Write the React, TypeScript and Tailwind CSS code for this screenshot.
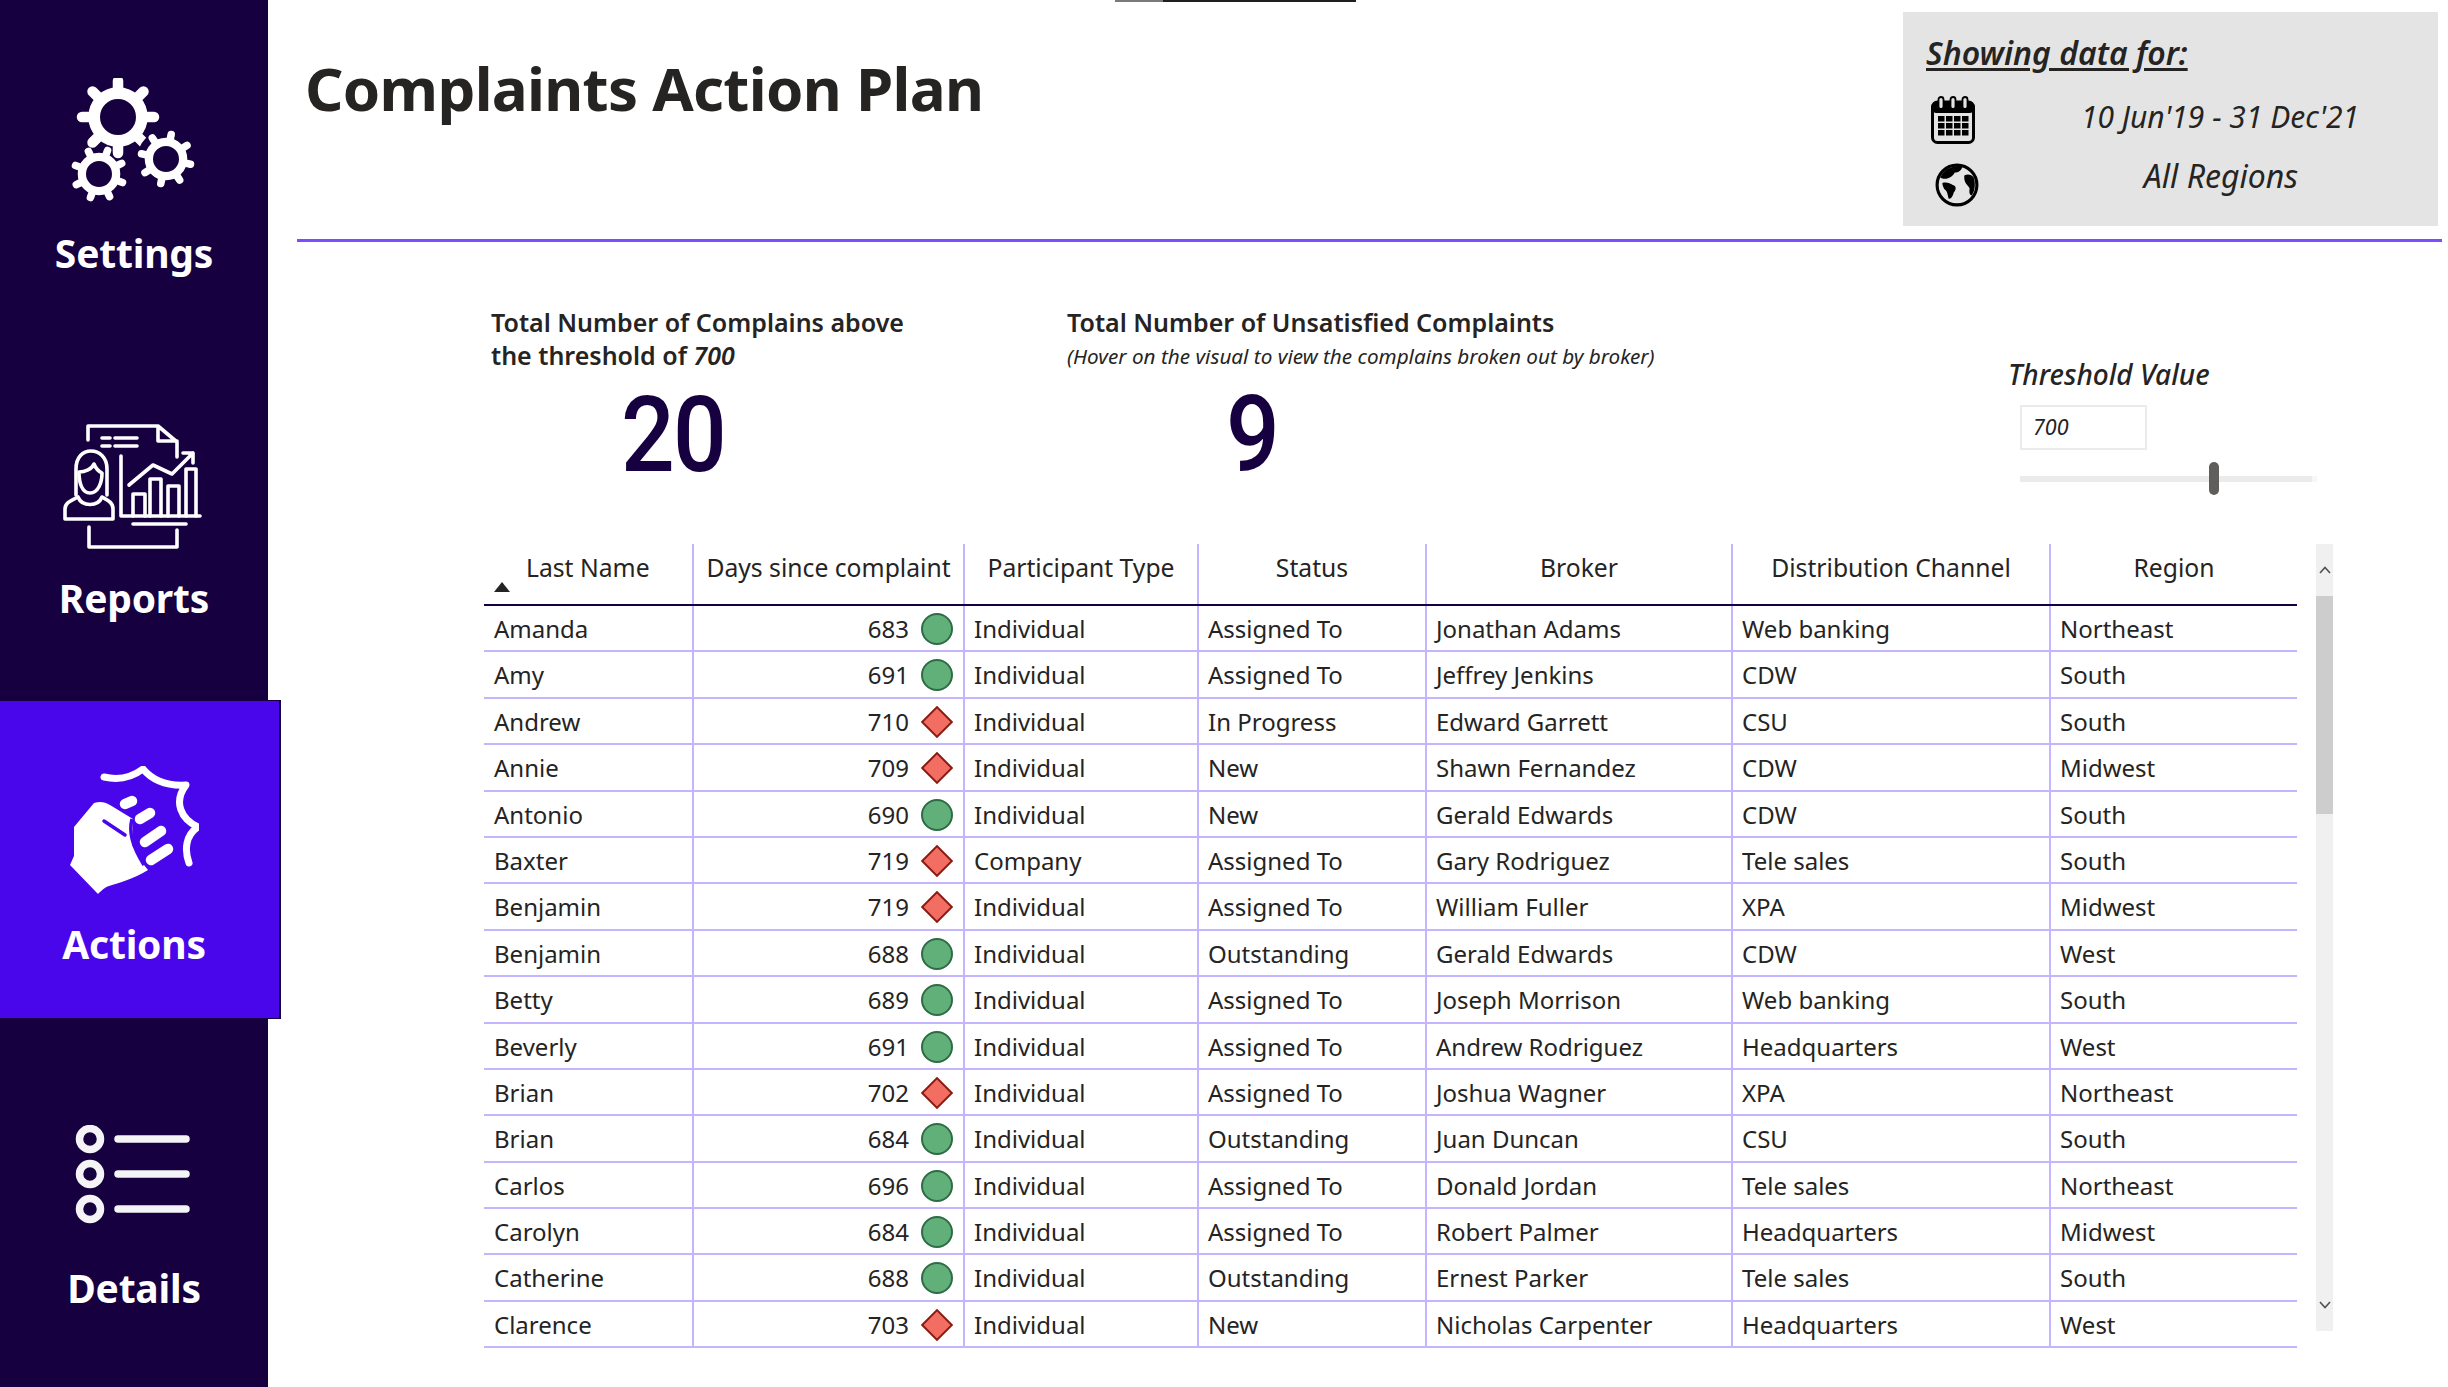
const rows: [string, number, string, string, string, string, string][] = [
  ["Amanda", 683, "Individual", "Assigned To", "Jonathan Adams", "Web banking", "Northeast"],
  ["Amy", 691, "Individual", "Assigned To", "Jeffrey Jenkins", "CDW", "South"],
  ["Andrew", 710, "Individual", "In Progress", "Edward Garrett", "CSU", "South"],
  ["Annie", 709, "Individual", "New", "Shawn Fernandez", "CDW", "Midwest"],
  ["Antonio", 690, "Individual", "New", "Gerald Edwards", "CDW", "South"],
  ["Baxter", 719, "Company", "Assigned To", "Gary Rodriguez", "Tele sales", "South"],
  ["Benjamin", 719, "Individual", "Assigned To", "William Fuller", "XPA", "Midwest"],
  ["Benjamin", 688, "Individual", "Outstanding", "Gerald Edwards", "CDW", "West"],
  ["Betty", 689, "Individual", "Assigned To", "Joseph Morrison", "Web banking", "South"],
  ["Beverly", 691, "Individual", "Assigned To", "Andrew Rodriguez", "Headquarters", "West"],
  ["Brian", 702, "Individual", "Assigned To", "Joshua Wagner", "XPA", "Northeast"],
  ["Brian", 684, "Individual", "Outstanding", "Juan Duncan", "CSU", "South"],
  ["Carlos", 696, "Individual", "Assigned To", "Donald Jordan", "Tele sales", "Northeast"],
  ["Carolyn", 684, "Individual", "Assigned To", "Robert Palmer", "Headquarters", "Midwest"],
  ["Catherine", 688, "Individual", "Outstanding", "Ernest Parker", "Tele sales", "South"],
  ["Clarence", 703, "Individual", "New", "Nicholas Carpenter", "Headquarters", "West"],
];

const columns = "grid grid-cols-[210px_271px_234px_228px_306px_318px_246px]";

function Gear({ cx, cy, r, hole, teeth, rot = 0 }: { cx: number; cy: number; r: number; hole: number; teeth: number; rot?: number }) {
  const bodyR = r * 0.76;
  const ring = bodyR - hole;
  return (
    <g>
      {Array.from({ length: teeth }).map((_, i) => (
        <line
          key={i}
          x1={cx}
          y1={cy - bodyR}
          x2={cx}
          y2={cy - r + 3}
          stroke="white"
          strokeWidth={r * 0.27}
          strokeLinecap="round"
          transform={`rotate(${rot + (i * 360) / teeth} ${cx} ${cy})`}
        />
      ))}
      <circle cx={cx} cy={cy} r={hole + ring / 2} fill="none" stroke="white" strokeWidth={ring} />
    </g>
  );
}

function SettingsIcon() {
  return (
    <svg width="125" height="125" viewBox="70 79 125 125" className="ml-[-3px]">
      <Gear cx={118} cy={118} r={39} hole={18} teeth={8} />
      <circle cx={166} cy={160} r={29} fill="#17003f" />
      <Gear cx={166} cy={160} r={28} hole={13} teeth={8} rot={12} />
      <Gear cx={99} cy={175} r={28} hole={13} teeth={8} rot={20} />
    </svg>
  );
}

function ReportsIcon() {
  return (
    <svg width="140" height="130" viewBox="63 421 140 130" className="ml-[-2px]" fill="none" stroke="white" strokeWidth="3.6" strokeLinecap="round" strokeLinejoin="round">
      <path d="M88 441V427H158L177 443V458M158 427V442H177" />
      <path d="M102 439H110M115 439H137M102 447H110M115 447H137" />
      <path d="M76 496V470C76 458 83 452 91 452C99 452 107 458 107 470V496" />
      <path d="M79 473C85 473 92 470 94 465C96 470 100 473 102 474C102 484 98 494 90 494C82 494 79 484 79 473Z" />
      <path d="M65 520V510C65 503 73 501 78 498C82 508 98 508 102 498C107 501 113 503 113 510V520H65Z" />
      <path d="M121 457V517H200" />
      <path d="M133 517V495H145V517M150 517V480H161V517M168 517V487H179V517M186 517V470H196V517" />
      <path d="M129 486L153 466L172 475L193 454M183 454H193V464" />
      <path d="M133 525H186" />
      <path d="M89 528V548H177V531" />
    </svg>
  );
}

function ActionsIcon() {
  return (
    <svg width="130" height="130" viewBox="68 767 130 130" className="ml-[-1px]">
      <path
        d="M103 778C116 781 130 779 142 770C152 782 168 787 185 786C172 803 180 820 197 828C185 836 183 850 188 864"
        fill="none"
        stroke="white"
        strokeWidth="7"
        strokeLinecap="round"
        strokeLinejoin="round"
      />
      <path
        d="M69 866L73 857L73 828L93 804C99 802 104 803 109 806L132 820L131 846L143 866L147 871C132 880 118 884 108 887C104 888 100 892 97 895Z"
        fill="white"
      />
      <path d="M103 822L124 836" fill="none" stroke="#4a06ea" strokeWidth="3.5" strokeLinecap="round" />
      <path d="M131 820C128 832 130 845 143 866" fill="none" stroke="#4a06ea" strokeWidth="3.5" />
      <g fill="none" stroke="white" strokeWidth="10.5" strokeLinecap="round">
        <path d="M124 805L131 802" />
        <path d="M139 820L149 814" />
        <path d="M144 843L160 832" />
        <path d="M150 861L167 850" />
      </g>
    </svg>
  );
}

function DetailsIcon() {
  return (
    <svg width="120" height="100" viewBox="72 1129 120 100" fill="none" stroke="#f4f4f6" className="ml-[-4px]">
      {[1143, 1178, 1213].map((y) => (
        <g key={y}>
          <circle cx={90} cy={y} r={10.5} strokeWidth={7.5} />
          <line x1={118} y1={y} x2={186} y2={y} strokeWidth={7.5} strokeLinecap="round" />
        </g>
      ))}
    </svg>
  );
}

function NavItem({ label, active, children }: { label: string; active?: boolean; children: React.ReactNode }) {
  return (
    <div
      className={
        active
          ? "h-[319px] w-[281px] shrink-0 border border-[#17003f] border-l-0 border-r-2 bg-[#4a06ea]"
          : "h-[319px] w-[268px] shrink-0"
      }
    >
      <div className="flex w-[268px] flex-col items-center pt-[65px]">
        <div className="flex h-[130px] items-center">{children}</div>
        <div className="mt-[27px] text-[39px] font-bold leading-[42px] tracking-[-0.2px] text-white">{label}</div>
      </div>
    </div>
  );
}

function CalendarIcon() {
  return (
    <svg width="44" height="48" viewBox="0 0 44 48" className="ml-[5px] mt-[4px] shrink-0">
      <rect x="1.5" y="6" width="41" height="40.5" rx="5" fill="none" stroke="black" strokeWidth="3" />
      <rect x="1.5" y="6" width="41" height="11" rx="4" fill="black" />
      {[10, 22, 34].map((x) => (
        <rect key={x} x={x - 2.5} y="1" width="5" height="12" rx="2.5" fill="#e4e4e4" stroke="black" strokeWidth="1.8" />
      ))}
      {[20, 27, 34].map((y) =>
        [7, 15, 23, 31].map((x) => <rect key={`${x}-${y}`} x={x} y={y} width="6.5" height="5.5" fill="black" />),
      )}
    </svg>
  );
}

function GlobeIcon() {
  return (
    <svg width="44" height="44" viewBox="0 0 42 42" className="ml-[9px] mt-[6px] shrink-0">
      <circle cx="21" cy="21" r="19" fill="none" stroke="black" strokeWidth="3" />
      <path d="M5 14C8 7 15 2 26 3C26 7 22 9 19 9C17 12 15 14 11 15C9 15 7 15 5 14Z" fill="black" />
      <path d="M7 19C11 18 14 19 17 21C21 22 20 26 18 28C17 32 15 35 13 34C12 30 12 27 9 25C8 23 7 21 7 19Z" fill="black" />
      <path d="M28 12C31 10 35 11 37 14C39 20 38 27 35 31C32 30 33 26 33 24C32 22 27 19 28 12Z" fill="black" />
    </svg>
  );
}

function Status({ value }: { value: number }) {
  if (value > 700) {
    return (
      <svg width="32" height="32" viewBox="0 0 32 32" className="shrink-0">
        <rect x="5.5" y="5.5" width="21" height="21" transform="rotate(45 16 16)" fill="#f26d62" stroke="#8b1a10" strokeWidth="2" />
      </svg>
    );
  }
  return <div className="h-[32px] w-[32px] shrink-0 rounded-full border-2 border-[#2f6b45] bg-[#61b07a]" />;
}

export default function App() {
  return (
    <div className="flex h-[1387px] w-[2448px] overflow-hidden bg-white font-['Noto_Sans',sans-serif] text-[#252423]">
      {/* Left nav */}
      <aside className="flex w-[268px] shrink-0 flex-col gap-[26px] bg-[#17003f] pt-[10px]">
        <NavItem label="Settings"><SettingsIcon /></NavItem>
        <NavItem label="Reports"><ReportsIcon /></NavItem>
        <NavItem label="Actions" active><ActionsIcon /></NavItem>
        <NavItem label="Details"><DetailsIcon /></NavItem>
      </aside>

      <main className="flex min-w-0 flex-1 flex-col">
        <div className="ml-[847px] flex h-[2px] w-[241px] shrink-0">
          <div className="w-[48px] bg-[#7a7a7a]" />
          <div className="flex-1 bg-[#1f1f1f]" />
        </div>

        {/* Title and date box */}
        <header className="flex h-[237px] shrink-0 items-start justify-between">
          <h1 className="ml-[37px] mt-[47px] text-[60px] font-bold leading-[78px] tracking-[-0.7px]">
            Complaints Action Plan
          </h1>
          <div className="mr-[10px] mt-[10px] h-[214px] w-[535px] bg-[#e4e4e4] px-[23px] pt-[18px] italic">
            <div className="text-[32px] font-semibold leading-[46px] underline underline-offset-[3px]">Showing data for:</div>
            <div className="mt-[16px] flex items-center">
              <CalendarIcon />
              <div className="mb-[2px] flex-1 pl-[50px] text-center text-[30px] leading-[48px]">10 Jun'19 - 31 Dec'21</div>
            </div>
            <div className="mt-[11px] flex items-center">
              <GlobeIcon />
              <div className="mb-[12px] flex-1 pl-[48px] text-center text-[32px] leading-[42px]">All Regions</div>
            </div>
          </div>
        </header>

        <div className="ml-[29px] mr-[6px] h-[3px] shrink-0 bg-[#7c4dff]" />

        {/* KPI row */}
        <section className="flex h-[302px] shrink-0">
          <div className="ml-[223px] w-[576px] pt-[64px]">
            <div className="w-[440px] text-[25px] font-semibold leading-[33px]">
              Total Number of Complains above the threshold of <span className="italic">700</span>
            </div>
            <div className="ml-[130px] mt-[5px] origin-left scale-x-[0.9] font-['Roboto',sans-serif] text-[105px] font-medium leading-[118px] tracking-[-2px] text-[#17003f]">20</div>
          </div>
          <div className="w-[941px] pt-[64px]">
            <div className="text-[25px] font-semibold leading-[33px]">Total Number of Unsatisfied Complaints</div>
            <div className="mt-[1px] text-[20.7px] italic leading-[33px]">(Hover on the visual to view the complains broken out by broker)</div>
            <div className="ml-[159px] mt-[4px] origin-left scale-x-[0.9] font-['Roboto',sans-serif] text-[105px] font-medium leading-[118px] text-[#17003f]">9</div>
          </div>
          <div className="pt-[116px]">
            <div className="text-[28px] font-medium italic leading-[32px]">Threshold Value</div>
            <div className="ml-[12px] mt-[15px] flex h-[45px] w-[127px] items-center border-2 border-[#ebebeb] pl-[11px] text-[21.5px] italic">700</div>
            <div className="ml-[12px] mt-[26px] flex h-[6px] w-[297px] bg-[#f7f7f7]">
              <div className="relative h-[6px] w-[292px] bg-[#ebebeb]">
                <div className="absolute left-[189px] top-[-14px] h-[33px] w-[10px] rounded-[5px] bg-[#605e5c]" />
              </div>
            </div>
          </div>
        </section>

        {/* Table and its scrollbar */}
        <section className="ml-[216px] flex">
          <div className="w-[1813px]">
            <div className={`${columns} h-[62px] border-b-[2px] border-[#17003f] text-[24.7px]`}>
              <div className="relative border-r-2 border-[#c5b5ff] pl-[42px] pt-[7px] leading-[34px]">
                Last Name
                <svg width="16" height="10" viewBox="0 0 16 10" className="absolute left-[10px] top-[38px]">
                  <path d="M8 0L16 10H0Z" fill="#252423" />
                </svg>
              </div>
              {["Days since complaint", "Participant Type", "Status", "Broker", "Distribution Channel", "Region"].map((h, i) => (
                <div key={h} className={i === 5 ? "pt-[7px] text-center leading-[34px]" : "border-r-2 border-[#c5b5ff] pt-[7px] text-center leading-[34px]"}>
                  {h}
                </div>
              ))}
            </div>
            {rows.map((r, i) => (
              <div key={i} className={`${columns} h-[46.4px] border-b-2 border-[#c5b5ff] text-[24px] leading-[46px]`}>
                <div className="border-r-2 border-[#c5b5ff] pl-[10px]">{r[0]}</div>
                <div className="flex items-center justify-end gap-[12px] border-r-2 border-[#c5b5ff] pr-[10px]">
                  {r[1]}
                  <Status value={r[1]} />
                </div>
                <div className="border-r-2 border-[#c5b5ff] pl-[9px]">{r[2]}</div>
                <div className="border-r-2 border-[#c5b5ff] pl-[9px]">{r[3]}</div>
                <div className="border-r-2 border-[#c5b5ff] pl-[9px]">{r[4]}</div>
                <div className="border-r-2 border-[#c5b5ff] pl-[9px]">{r[5]}</div>
                <div className="pl-[9px]">{r[6]}</div>
              </div>
            ))}
          </div>
          <div className="ml-[19px] flex h-[787px] w-[17px] flex-col bg-[#f0f0f0]">
            <div className="flex h-[52px] items-center justify-center">
              <svg width="12" height="8" viewBox="0 0 12 8" fill="none" stroke="#505050" strokeWidth="1.6"><path d="M1 7L6 1.5L11 7" /></svg>
            </div>
            <div className="h-[218px] bg-[#cdcdcd]" />
            <div className="flex flex-1 items-end justify-center pb-[22px]">
              <svg width="12" height="8" viewBox="0 0 12 8" fill="none" stroke="#505050" strokeWidth="1.6"><path d="M1 1L6 6.5L11 1" /></svg>
            </div>
          </div>
        </section>
      </main>
    </div>
  );
}
